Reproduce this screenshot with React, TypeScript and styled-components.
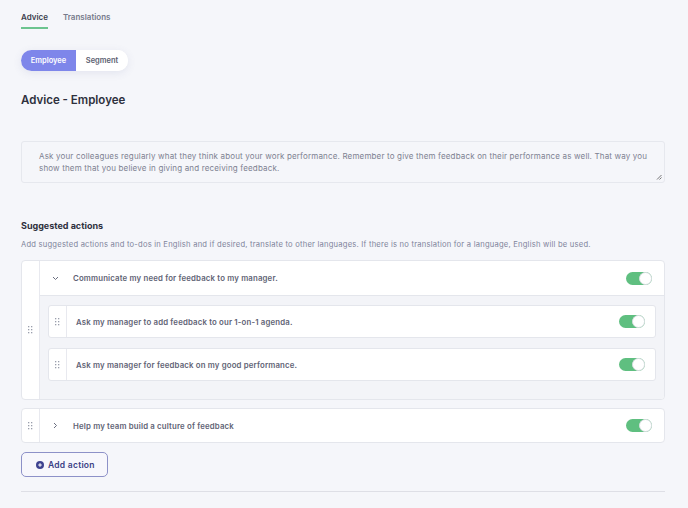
import React from 'react';
import styled, { createGlobalStyle } from 'styled-components';

const Global = createGlobalStyle`
  html, body { margin: 0; padding: 0; background: #f5f6fa; }
  body { font-family: Inter, "Noto Sans", sans-serif; -webkit-font-smoothing: antialiased; }
  * { box-sizing: border-box; }
`;

const Page = styled.div`
  width: 688px;
  height: 508px;
  padding: 0 23px 0 21px;
  display: flex;
  flex-direction: column;
  overflow: hidden;
`;

const Tabs = styled.div`
  display: flex;
  gap: 15px;
`;

const Tab = styled.div<{ $active?: boolean }>`
  padding-top: 11px;
  padding-bottom: 4px;
  line-height: 12px;
  font-size: 8px;
  font-weight: 600;
  color: ${p => (p.$active ? '#3a3d4c' : '#777b8c')};
  border-bottom: 2px solid ${p => (p.$active ? '#6cc48f' : 'transparent')};
`;

const Segmented = styled.div`
  margin-top: 21px;
  display: flex;
  align-self: flex-start;
  height: 21px;
  border-radius: 11px;
  background: #fff;
  box-shadow: 0 2px 8px rgba(90, 100, 160, 0.12);
  overflow: hidden;
`;

const Segment = styled.div<{ $active?: boolean }>`
  display: flex;
  align-items: center;
  justify-content: center;
  width: ${p => (p.$active ? '55px' : '52px')};
  font-size: 7.5px;
  font-weight: 600;
  color: ${p => (p.$active ? '#ffffff' : '#5a5e70')};
  background: ${p => (p.$active ? '#7e86ea' : '#ffffff')};
`;

const Title = styled.h1`
  margin: 21px 0 0;
  font-size: 11.5px;
  line-height: 16px;
  font-weight: 600;
  color: #2e303d;
`;

const TextBox = styled.div`
  position: relative;
  margin-top: 33px;
  height: 42px;
  border: 1px solid #e6e8ee;
  border-radius: 3px;
  padding: 8px 14px 0 17px;
  font-size: 8px;
  letter-spacing: 0.16px;
  line-height: 12px;
  color: #7d8191;
`;

const Resize = styled.svg`
  position: absolute;
  right: 2px;
  bottom: 2px;
`;

const SectionTitle = styled.h2`
  margin: 37px 0 0;
  font-size: 9px;
  line-height: 12px;
  font-weight: 700;
  color: #2e303d;
`;

const Desc = styled.p`
  margin: 7px 0 0;
  font-size: 7.6px;
  letter-spacing: 0.22px;
  line-height: 12px;
  color: #80849a;
`;

const Group = styled.div<{ $top: number }>`
  margin-top: ${p => p.$top}px;
  display: grid;
  grid-template-columns: 18px 1fr;
  background: #fff;
  border: 1px solid #e4e6ec;
  border-radius: 4px;
`;

const HandleCol = styled.div`
  display: flex;
  align-items: center;
  justify-content: center;
  border-right: 1px solid #e8e9ef;
`;

const GroupMain = styled.div`
  display: flex;
  flex-direction: column;
`;

const HeaderRow = styled.div<{ $open?: boolean }>`
  height: ${p => (p.$open ? '35px' : '33px')};
  display: flex;
  align-items: center;
  padding: 0 12px 0 12px;
  border-bottom: ${p => (p.$open ? '1px solid #e4e6ec' : 'none')};
`;

const Chevron = styled.svg`
  flex: none;
  margin-right: 14px;
`;

const RowText = styled.span`
  flex: 1;
  font-size: 7.8px;
  letter-spacing: 0.17px;
  font-weight: 600;
  color: #5f6375;
`;

const GroupBody = styled.div`
  background: #f3f4f8;
  padding: 9px 8px 18px 8px;
  display: flex;
  flex-direction: column;
  gap: 10px;
  border-bottom-right-radius: 4px;
`;

const SubCard = styled.div`
  height: 33px;
  display: grid;
  grid-template-columns: 18px 1fr;
  background: #fff;
  border: 1px solid #e4e6ec;
  border-radius: 3px;
`;

const SubRow = styled.div`
  display: flex;
  align-items: center;
  padding: 0 10px 0 9px;
`;

const Toggle = styled.div`
  flex: none;
  position: relative;
  width: 26px;
  height: 13px;
  border-radius: 7px;
  background: #5fbf80;
`;

const Knob = styled.div`
  position: absolute;
  right: 0;
  top: 0;
  width: 13px;
  height: 13px;
  border-radius: 50%;
  background: #fff;
  border: 1px solid #dcdfe4;
`;

const AddButton = styled.button`
  margin-top: 9px;
  align-self: flex-start;
  height: 25px;
  width: 87px;
  display: flex;
  align-items: center;
  gap: 4px;
  padding: 0 0 0 14px;
  background: #f7f7fc;
  border: 1px solid #8d91c8;
  border-radius: 5px;
  font-family: inherit;
  font-size: 8.5px;
  letter-spacing: 0.25px;
  font-weight: 600;
  color: #3b3f86;
`;

const Divider = styled.div`
  margin-top: 14px;
  border-top: 1px solid #dedfe6;
`;

const Dots = () => (
  <svg width="5" height="8" viewBox="0 0 5 8">
    {[0, 3, 6].map(y => (
      <React.Fragment key={y}>
        <rect x="0" y={y} width="1.3" height="1.3" fill="#9a9eac" />
        <rect x="3" y={y} width="1.3" height="1.3" fill="#9a9eac" />
      </React.Fragment>
    ))}
  </svg>
);

const Switch = () => (
  <Toggle>
    <Knob />
  </Toggle>
);

export default function App() {
  return (
    <>
      <Global />
      <Page>
        <Tabs>
          <Tab $active>Advice</Tab>
          <Tab>Translations</Tab>
        </Tabs>
        <Segmented>
          <Segment $active>Employee</Segment>
          <Segment>Segment</Segment>
        </Segmented>
        <Title>Advice - Employee</Title>
        <TextBox>
          Ask your colleagues regularly what they think about your work performance. Remember to give them feedback on their performance as well. That way you show them that you believe in giving and receiving feedback.
          <Resize width="6" height="6" viewBox="0 0 6 6">
            <path d="M1 5.5 L5.5 1 M3.5 5.5 L5.5 3.5" stroke="#555" strokeWidth="0.8" />
          </Resize>
        </TextBox>
        <SectionTitle>Suggested actions</SectionTitle>
        <Desc>
          Add suggested actions and to-dos in English and if desired, translate to other languages. If there is no translation for a language, English will be used.
        </Desc>
        <Group $top={9}>
          <HandleCol>
            <Dots />
          </HandleCol>
          <GroupMain>
            <HeaderRow $open>
              <Chevron width="7" height="5" viewBox="0 0 7 5">
                <path d="M1 1 L3.5 3.5 L6 1" fill="none" stroke="#6b6f80" strokeWidth="1" />
              </Chevron>
              <RowText>Communicate my need for feedback to my manager.</RowText>
              <Switch />
            </HeaderRow>
            <GroupBody>
              <SubCard>
                <HandleCol>
                  <Dots />
                </HandleCol>
                <SubRow>
                  <RowText>Ask my manager to add feedback to our 1-on-1 agenda.</RowText>
                  <Switch />
                </SubRow>
              </SubCard>
              <SubCard>
                <HandleCol>
                  <Dots />
                </HandleCol>
                <SubRow>
                  <RowText>Ask my manager for feedback on my good performance.</RowText>
                  <Switch />
                </SubRow>
              </SubCard>
            </GroupBody>
          </GroupMain>
        </Group>
        <Group $top={8}>
          <HandleCol>
            <Dots />
          </HandleCol>
          <GroupMain>
            <HeaderRow>
              <Chevron width="7" height="7" viewBox="0 0 7 7">
                <path d="M2 1 L4.5 3.5 L2 6" fill="none" stroke="#6b6f80" strokeWidth="1" />
              </Chevron>
              <RowText>Help my team build a culture of feedback</RowText>
              <Switch />
            </HeaderRow>
          </GroupMain>
        </Group>
        <AddButton>
          <svg width="8" height="8" viewBox="0 0 8 8">
            <circle cx="4" cy="4" r="4" fill="#3f4390" />
            <path d="M4 2.2 V5.8 M2.2 4 H5.8" stroke="#fff" strokeWidth="1.1" />
          </svg>
          Add action
        </AddButton>
        <Divider />
      </Page>
    </>
  );
}
